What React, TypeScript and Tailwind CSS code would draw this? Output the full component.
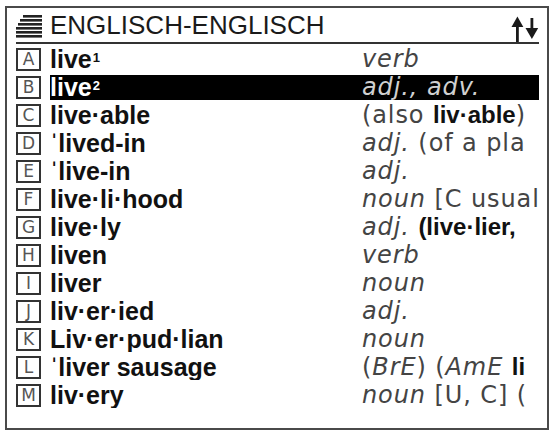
import React from "react";

type Entry = {
  key: string;
  head: React.ReactNode;
  info: React.ReactNode;
};

const I = ({ children }: { children: React.ReactNode }) => <span className="italic">{children}</span>;
const B = ({ children }: { children: React.ReactNode }) => (
  <span className="font-bold tracking-normal text-[#111]" style={{ fontFamily: "'Liberation Sans', Arial, sans-serif" }}>
    {children}
  </span>
);

// the info column only shows what fits on the display line
const entries: Entry[] = [
  { key: "A", head: <>live<sup className="ml-[1px] text-[13px]">1</sup></>, info: <I>verb</I> },
  { key: "B", head: <>live<sup className="ml-[1px] text-[13px]">2</sup></>, info: <I>adj., adv.</I> },
  { key: "C", head: "live·able", info: <>(also <B>liv·able</B>)</> },
  { key: "D", head: "ˈlived-in", info: <><I>adj.</I> (of a pla</> },
  { key: "E", head: "ˈlive-in", info: <I>adj.</I> },
  { key: "F", head: "live·li·hood", info: <><I>noun</I> [C usual</> },
  { key: "G", head: "live·ly", info: <><I>adj.</I> <B>(live·lier,</B></> },
  { key: "H", head: "liven", info: <I>verb</I> },
  { key: "I", head: "liver", info: <I>noun</I> },
  { key: "J", head: "liv·er·ied", info: <I>adj.</I> },
  { key: "K", head: "Liv·er·pud·lian", info: <I>noun</I> },
  { key: "L", head: "ˈliver sausage", info: <>(<I>BrE</I>) (<I>AmE</I> <B>li</B></> },
  { key: "M", head: "liv·ery", info: <><I>noun</I> [U, C] (</> },
];

const SELECTED = "B";

function MenuGlyph() {
  // stacked bars, shorter toward the top
  const bars = [
    { y: 1, x: 7 },
    { y: 5, x: 4 },
    { y: 9, x: 2 },
    { y: 13, x: 0 },
    { y: 17, x: 0 },
    { y: 21, x: 0 },
  ];
  return (
    <svg width="27" height="25" viewBox="0 0 27 25" className="shrink-0">
      {bars.map((b) => (
        <rect key={b.y} x={b.x} y={b.y} width={26 - b.x} height="2.6" fill="#222" />
      ))}
    </svg>
  );
}

function SortGlyph() {
  return (
    <svg width="28" height="26" viewBox="0 0 28 26" className="shrink-0">
      <rect x="5" y="6" width="2.8" height="20" fill="#1a1a1a" />
      <polygon points="0.5,11 6.4,0.5 12.3,11" fill="#1a1a1a" />
      <rect x="19.5" y="2" width="2.8" height="14" fill="#1a1a1a" />
      <polygon points="14.5,12 20.9,23 27.2,12" fill="#1a1a1a" />
    </svg>
  );
}

function LetterBox({ letter }: { letter: string }) {
  return (
    <div
      className="flex h-[23px] w-[25px] shrink-0 items-center justify-center border-2 border-[#333] text-[17px] leading-none text-[#555]"
      style={{ fontFamily: "'DejaVu Sans', sans-serif" }}
    >
      {letter}
    </div>
  );
}

export default function App() {
  return (
    <div className="h-[435px] w-[554px] bg-white pl-[5px] pt-[6px]">
      <div className="h-[424px] w-[544px] border-2 border-[#4a4a4a] pl-[9px] pr-[8px]">
        <div className="flex h-[36px] items-end border-b-2 border-[#333] pb-[3px]">
          <div className="flex w-full items-end">
            <MenuGlyph />
            <span
              className="ml-[7px] text-[26px] leading-[28px] text-[#1a1a1a]"
              style={{ fontFamily: "'Liberation Sans', Arial, sans-serif" }}
            >
              ENGLISCH-ENGLISCH
            </span>
            <div className="mb-[-3px] ml-auto">
              <SortGlyph />
            </div>
          </div>
        </div>

        <div className="flex flex-col pt-[1px]">
          {entries.map((e) => {
            const sel = e.key === SELECTED;
            return (
              <div key={e.key} className="flex h-[28px] items-center">
                <LetterBox letter={e.key} />
                <div
                  className={`ml-[9px] flex h-[25px] min-w-0 flex-1 items-center overflow-hidden whitespace-nowrap ${
                    sel ? "bg-black" : ""
                  }`}
                >
                  <div
                    className={`w-[312px] shrink-0 text-[25px] font-bold leading-[28px] ${
                      sel ? "text-white" : "text-[#111]"
                    }`}
                    style={{ fontFamily: "'Liberation Sans', Arial, sans-serif" }}
                  >
                    {e.head}
                  </div>
                  <div
                    className={`text-[24px] leading-[28px] tracking-[0.9px] ${sel ? "text-[#d0d0d0]" : "text-[#444]"}`}
                    style={{ fontFamily: "'DejaVu Sans', sans-serif" }}
                  >
                    {e.info}
                  </div>
                </div>
              </div>
            );
          })}
        </div>
      </div>
    </div>
  );
}
